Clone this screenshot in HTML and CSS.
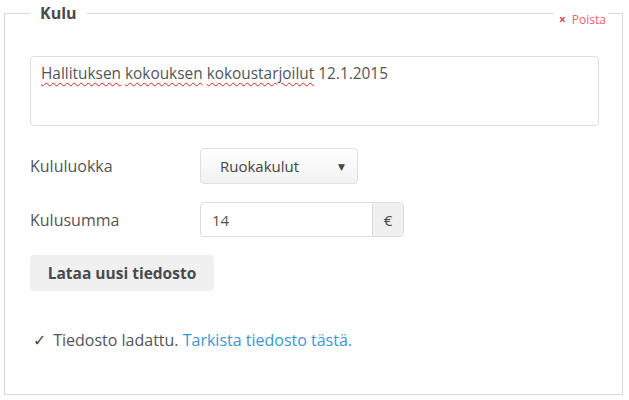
FILE: index.html
```html
<!DOCTYPE html>
<html lang="fi">
<head>
<meta charset="utf-8">
<link rel="stylesheet" href="styles.css">
</head>
<body>
<div class="page">
  <fieldset class="card">
    <legend class="card-title">Kulu</legend>
    <a class="remove" href="#"><span class="remove-x">×</span> Poista</a>
    <div class="desc"><span class="misspelled">Hallituksen</span> <span class="misspelled">kokouksen</span> <span class="misspelled">kokoustarjoilut</span> 12.1.2015</div>
    <div class="row">
      <label class="label">Kululuokka</label>
      <div class="select">
        <span class="select-value">Ruokakulut</span>
        <span class="select-arrow">▼</span>
      </div>
    </div>
    <div class="row">
      <label class="label">Kulusumma</label>
      <div class="amount">
        <span class="amount-input">14</span>
        <span class="amount-addon">€</span>
      </div>
    </div>
    <button class="upload">Lataa uusi tiedosto</button>
    <p class="status"><span class="check">✓</span> Tiedosto ladattu. <a class="link" href="#">Tarkista tiedosto tästä.</a></p>
  </fieldset>
</div>
</body>
</html>
```
FILE: styles.css
```css
html, body {
  margin: 0;
  padding: 0;
  background: #fff;
}
body {
  font-family: "Open Sans", "DejaVu Sans", sans-serif;
  color: #555;
  font-size: 16px;
}
.page {
  padding: 5px 6px 6px 4px;
}
.card {
  position: relative;
  margin: 0;
  border: 1px solid #d9d9d9;
  padding: 35px 23px 39px 25px;
  box-sizing: border-box;
  height: 390px;
}
.card-title {
  margin-left: 0;
  padding: 0 10px;
  font-weight: bold;
  font-size: 16px;
  color: #4a4a4a;
  line-height: 16px;
}
.remove {
  position: absolute;
  top: -9px;
  right: 14px;
  background: #fff;
  padding: 0 2px 0 5px;
  font-size: 12px;
  line-height: 16px;
  color: #f0606e;
  text-decoration: none;
}
.remove-x {
  font-weight: bold;
  color: #e8404c;
  margin-right: 3px;
}
.desc {
  border: 1px solid #ddd;
  border-radius: 4px;
  height: 70px;
  box-sizing: border-box;
  padding: 6px 10px;
  font-size: 15.4px;
  line-height: 22px;
  color: #555;
}
.misspelled {
  text-decoration: underline wavy #e0241b;
  text-decoration-thickness: 1px;
  text-underline-offset: 3px;
}
.row {
  display: flex;
  align-items: center;
  margin-top: 22px;
}
.row + .row {
  margin-top: 18px;
}
.label {
  width: 170px;
  font-size: 16px;
  color: #555;
}
.select {
  width: 158px;
  height: 36px;
  box-sizing: border-box;
  border: 1px solid #e0e0e0;
  border-radius: 4px;
  background: linear-gradient(#ffffff, #f2f2f2);
  display: flex;
  align-items: center;
  padding: 0 12px 0 19px;
  justify-content: space-between;
  font-size: 15px;
  color: #444;
}
.select-arrow {
  font-size: 9px;
  color: #444;
}
.amount {
  display: flex;
  height: 35px;
  box-sizing: border-box;
  border: 1px solid #ddd;
  border-radius: 4px;
  width: 204px;
  overflow: hidden;
}
.amount-input {
  flex: 1;
  display: flex;
  align-items: center;
  padding-left: 11px;
  font-size: 15px;
  color: #555;
}
.amount-addon {
  width: 30px;
  background: #f0f0f0;
  border-left: 1px solid #ddd;
  display: flex;
  align-items: center;
  justify-content: center;
  font-size: 15px;
  color: #444;
}
.upload {
  display: block;
  margin-top: 18px;
  width: 184px;
  height: 36px;
  border: none;
  border-radius: 4px;
  background: #f0f0f0;
  font-family: "Open Sans", "DejaVu Sans", sans-serif;
  font-weight: bold;
  font-size: 15.5px;
  color: #4a4a4a;
  padding: 0;
}
.status {
  margin: 38px 0 0 0;
  font-size: 16px;
  line-height: 22px;
  color: #555;
}
.check {
  display: inline-block;
  width: 16px;
  padding-left: 3px;
  color: #444;
  font-weight: bold;
}
.link {
  color: #3a97d4;
  text-decoration: none;
}
```
